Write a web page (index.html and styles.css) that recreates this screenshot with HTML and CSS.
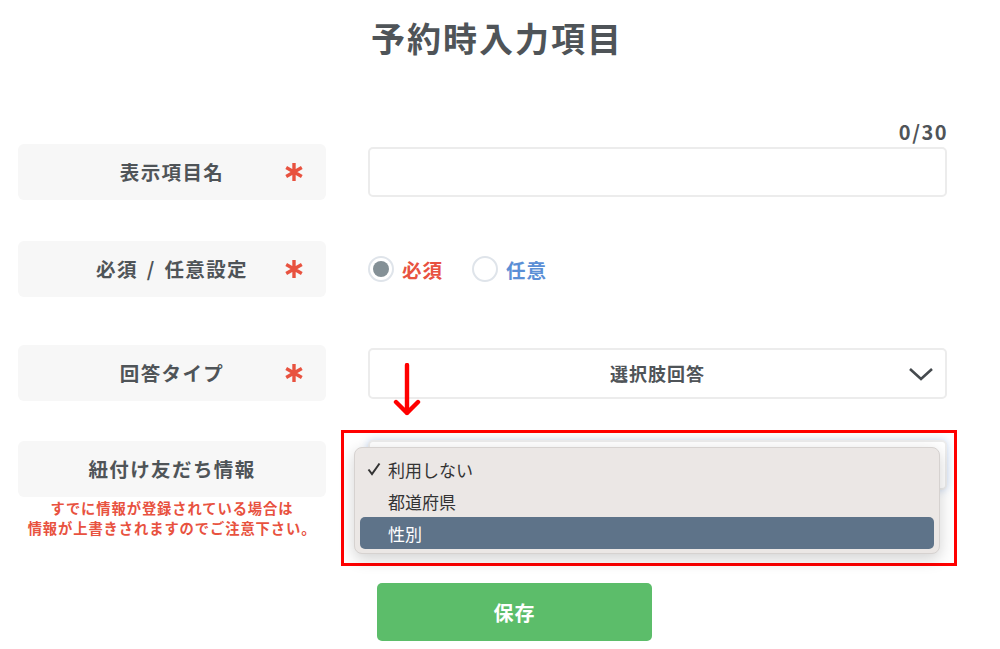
FILE: index.html
```html
<!DOCTYPE html>
<html lang="ja">
<head>
    <meta charset="UTF-8">
    <meta name="viewport" content="width=device-width, initial-scale=1.0">
    <title>予約時入力項目</title>
    <link rel="stylesheet" href="styles.css">
</head>
<body>
    <div class="page">
        <h1 class="title">予約時入力項目</h1>

        <div class="counter-row">
            <div></div>
            <div class="counter">0/30</div>
        </div>

        <div class="row row-name">
            <div class="label">表示項目名
                <svg class="req" width="20" height="20" viewBox="0 0 20 20"><path d="M10 1V19M2.2 5.5L17.8 14.5M2.2 14.5L17.8 5.5"/></svg>
            </div>
            <div class="field">
                <input class="text-input" type="text">
            </div>
        </div>

        <div class="row row-required">
            <div class="label">必須 / 任意設定
                <svg class="req" width="20" height="20" viewBox="0 0 20 20"><path d="M10 1V19M2.2 5.5L17.8 14.5M2.2 14.5L17.8 5.5"/></svg>
            </div>
            <div class="field radios">
                <label class="radio"><span class="dot checked"></span><span class="radio-text must">必須</span></label>
                <label class="radio"><span class="dot"></span><span class="radio-text optional">任意</span></label>
            </div>
        </div>

        <div class="row row-type">
            <div class="label">回答タイプ
                <svg class="req" width="20" height="20" viewBox="0 0 20 20"><path d="M10 1V19M2.2 5.5L17.8 14.5M2.2 14.5L17.8 5.5"/></svg>
            </div>
            <div class="field">
                <div class="select">選択肢回答
                    <svg class="chevron" width="26" height="16" viewBox="0 0 26 16"><path d="M2 3L13 13L24 3"/></svg>
                </div>
            </div>
        </div>

        <div class="row row-link">
            <div class="left">
                <div class="label">紐付け友だち情報</div>
                <p class="warning">すでに情報が登録されている場合は<br>情報が上書きされますのでご注意下さい。</p>
            </div>
            <div class="field link-field">
                <div class="select focused"></div>

                <svg class="arrow" width="28" height="54" viewBox="0 0 28 54"><path d="M14 2V50M3 39L14 50L25 39"/></svg>
                <div class="frame"></div>

                <ul class="menu">
                    <li class="item"><span class="check"><svg width="14" height="14" viewBox="0 0 14 14"><path d="M1.5 7.5L5 12L12.5 1.5"/></svg></span>利用しない</li>
                    <li class="item"><span class="check"></span>都道府県</li>
                    <li class="item active"><span class="check"></span>性別</li>
                </ul>
            </div>
        </div>

        <div class="actions">
            <button class="save">保存</button>
        </div>
    </div>
</body>
</html>
```

FILE: styles.css
```css
body {
    margin: 0;
    background: #fff;
    font-family: "Noto Sans CJK JP", "Noto Sans", sans-serif;
    color: #4f5458;
}

.page {
    position: relative;
    width: 1000px;
    height: 649px;
    overflow: hidden;
}

.title {
    margin: 0;
    padding-top: 16px;
    padding-right: 6px;
    font-size: 34px;
    line-height: 44px;
    letter-spacing: 2px;
    text-align: center;
    font-weight: 700;
    color: #4f5458;
}

.counter-row,
.row {
    display: grid;
    grid-template-columns: 308px 579px;
    column-gap: 42px;
    margin-left: 18px;
}

.counter-row {
    margin-top: 61px;
    height: 22px;
}

.counter {
    text-align: right;
    font-size: 20px;
    line-height: 22px;
    font-weight: 700;
    letter-spacing: 1.5px;
    margin-right: -1px;
    color: #4f5458;
}

.row {
    align-items: center;
}

.row-name { margin-top: 1px; }
.row-required { margin-top: 41px; }
.row-type { margin-top: 48px; }
.row-link { margin-top: 40px; align-items: start; }

.label {
    position: relative;
    height: 56px;
    line-height: 56px;
    background: #f7f7f7;
    border-radius: 6px;
    text-align: center;
    font-size: 19.5px;
    font-weight: 700;
    letter-spacing: 1.4px;
    word-spacing: 3px;
    color: #4f5458;
}

.req {
    position: absolute;
    right: 22px;
    top: 18px;
    fill: none;
    stroke: #e8523f;
    stroke-width: 3.4;
}

.text-input {
    display: block;
    box-sizing: border-box;
    width: 100%;
    height: 50px;
    border: 2px solid #ececec;
    border-radius: 5px;
    background: #fff;
}

.radios {
    display: flex;
    align-items: center;
    gap: 29px;
}

.radio {
    display: flex;
    align-items: center;
    gap: 8px;
}

.dot {
    box-sizing: border-box;
    width: 26px;
    height: 26px;
    border: 2px solid #dfe4ea;
    border-radius: 50%;
    display: flex;
    align-items: center;
    justify-content: center;
}

.dot.checked::after {
    content: "";
    width: 16px;
    height: 16px;
    border-radius: 50%;
    background: #849096;
}

.radio-text {
    font-size: 19.5px;
    font-weight: 700;
    letter-spacing: 1px;
}

.must { color: #e8523f; }
.optional { color: #5b8fd6; }

.select {
    position: relative;
    box-sizing: border-box;
    height: 51px;
    line-height: 47px;
    border: 2px solid #ececec;
    border-radius: 5px;
    background: #fff;
    text-align: center;
    font-size: 18px;
    font-weight: 700;
    letter-spacing: 1px;
    color: #4f5458;
}

.chevron {
    position: absolute;
    right: 11px;
    top: 16px;
    fill: none;
    stroke: #454a4e;
    stroke-width: 2.6;
}

.left .warning {
    margin: 1px 0 0;
    text-align: center;
    font-size: 14.3px;
    line-height: 20px;
    font-weight: 700;
    letter-spacing: 0.9px;
    color: #e8523f;
}

.link-field {
    position: relative;
    margin-top: -1px;
}

.select.focused {
    height: 50px;
    box-shadow: 0 0 8px rgba(120, 160, 220, 0.45);
}

.arrow {
    position: absolute;
    left: 25px;
    top: -77px;
    fill: none;
    stroke: #f00;
    stroke-width: 4.4;
    stroke-linecap: round;
    stroke-linejoin: round;
}

.frame {
    position: absolute;
    left: -27px;
    top: -10px;
    width: 616px;
    height: 136px;
    box-sizing: border-box;
    border: 3px solid #f00;
}

.menu {
    position: absolute;
    left: -14px;
    top: 7px;
    width: 586px;
    box-sizing: border-box;
    margin: 0;
    padding: 5px 5px 4px;
    list-style: none;
    background: #ebe7e5;
    border: 1px solid #d6d2d0;
    border-radius: 8px;
    box-shadow: 0 5px 16px rgba(0, 0, 0, 0.18);
}

.item {
    display: flex;
    align-items: center;
    height: 32px;
    padding-left: 7px;
    border-radius: 5px;
    font-size: 17px;
    color: #333;
}

.check {
    display: flex;
    width: 21px;
}

.check svg {
    fill: none;
    stroke: #333;
    stroke-width: 2;
}

.item.active {
    background: #5e7389;
    color: #fff;
}

.actions {
    margin-top: 45px;
    padding-left: 377px;
}

.save {
    width: 275px;
    height: 58px;
    border: none;
    border-radius: 5px;
    background: #5cbd6a;
    color: #fff;
    font-family: "Noto Sans CJK JP", "Noto Sans", sans-serif;
    font-size: 20px;
    font-weight: 700;
    letter-spacing: 1px;
}
```
